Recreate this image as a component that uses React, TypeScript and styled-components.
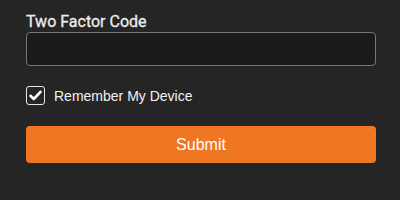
import React, { useState } from "react";
import styled, { createGlobalStyle } from "styled-components";

const GlobalStyle = createGlobalStyle`
  html, body {
    margin: 0;
    padding: 0;
    background: #252525;
  }
`;

const Page = styled.div`
  width: 400px;
  height: 200px;
  box-sizing: border-box;
  padding: 12px 24px 0 26px;
  background: #252525;
  display: flex;
  flex-direction: column;
`;

const Label = styled.label`
  font-family: Roboto, "Liberation Sans", sans-serif;
  font-size: 16px;
  font-weight: 400;
  color: #ececec;
  line-height: 19px;
  margin-bottom: 1px;
  -webkit-text-stroke: 0.3px #ececec;
`;

const CodeInput = styled.input`
  box-sizing: border-box;
  height: 34px;
  width: 100%;
  background: #1b1b1b;
  border: 1px solid #777;
  border-radius: 4px;
  color: #eee;
  font-family: Roboto, sans-serif;
  font-size: 15px;
  padding: 0 10px;
  outline: none;
`;

const CheckRow = styled.label`
  display: flex;
  align-items: center;
  gap: 9px;
  margin-top: 20px;
  cursor: pointer;
`;

const Box = styled.span<{ $checked: boolean }>`
  box-sizing: border-box;
  width: 19px;
  height: 19px;
  border: 1.5px solid #e6e6e6;
  border-radius: 3px;
  display: flex;
  align-items: center;
  justify-content: center;
  background: ${(p) => (p.$checked ? "#252525" : "transparent")};
`;

const CheckText = styled.span`
  font-family: "Liberation Sans", Arial, sans-serif;
  font-size: 14px;
  color: #f2f2f2;
`;

const SubmitButton = styled.button`
  margin-top: 21px;
  height: 37px;
  width: 100%;
  background: #ef7622;
  border: none;
  border-radius: 4px;
  color: #fff;
  font-family: "Liberation Sans", Arial, sans-serif;
  font-size: 16px;
  cursor: pointer;
`;

export default function App() {
  const [remember, setRemember] = useState(true);
  return (
    <>
      <GlobalStyle />
      <Page>
        <Label htmlFor="code">Two Factor Code</Label>
        <CodeInput id="code" />
        <CheckRow onClick={() => setRemember(!remember)}>
          <Box $checked={remember}>
            {remember && (
              <svg width="13" height="11" viewBox="0 0 13 11">
                <path
                  d="M1.5 5.8 L4.8 9 L11.5 1.8"
                  fill="none"
                  stroke="#fff"
                  strokeWidth="2.6"
                  strokeLinecap="round"
                  strokeLinejoin="round"
                />
              </svg>
            )}
          </Box>
          <CheckText>Remember My Device</CheckText>
        </CheckRow>
        <SubmitButton>Submit</SubmitButton>
      </Page>
    </>
  );
}
